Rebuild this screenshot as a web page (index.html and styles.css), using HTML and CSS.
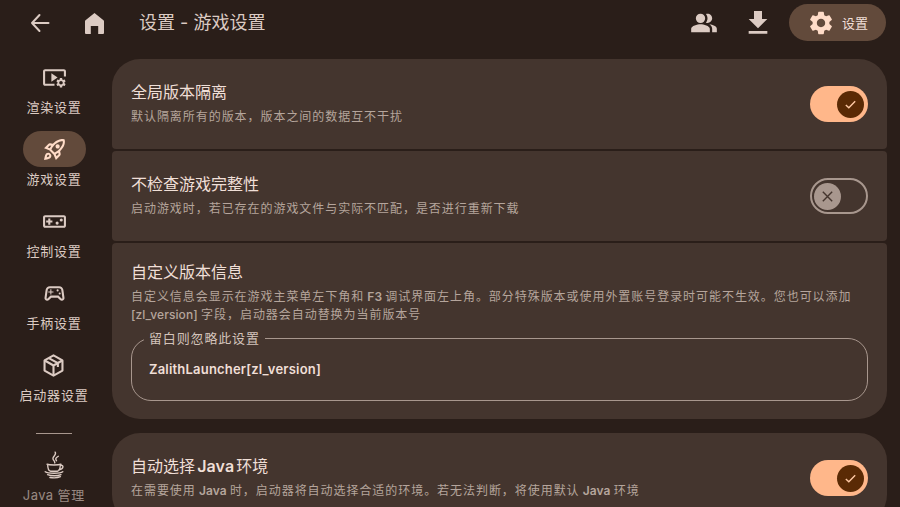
FILE: index.html
```html
<!DOCTYPE html>
<html lang="zh-CN">
<head>
    <meta charset="UTF-8">
    <meta name="viewport" content="width=device-width, initial-scale=1.0">
    <title>设置 - 游戏设置</title>
    <link rel="stylesheet" href="styles.css">
</head>
<body>
    <!-- Top bar -->
    <div class="topbar">
        <div class="topbar-left">
            <svg class="top-icon back-icon" viewBox="0 0 24 24"><path d="M20.500 12H4M11.500 4L4 12l7.500 8"/></svg>
            <svg class="top-icon" viewBox="0 0 24 24"><path d="M12.500 2l9 7.300c.3.2.5.6.5 1V22a1 1 0 01-1 1h-4.800v-8h-7.400v8H4a1 1 0 01-1-1V10.300c0-.4.200-.8.500-1z"/></svg>
            <span class="page-title">设置 - 游戏设置</span>
        </div>
        <div class="topbar-right">
            <svg class="people-icon" viewBox="0 0 24 24"><path d="M16.67 13.13C18.04 14.06 19 15.32 19 17v3h4v-3c0-2.18-3.57-3.47-6.33-3.87zM9 4a4 4 0 100 8 4 4 0 000-8zM15 12c2.21 0 4-1.79 4-4s-1.79-4-4-4c-.47 0-.91.1-1.33.24C14.5 5.27 15 6.58 15 8s-.5 2.73-1.33 3.76c.42.14.86.24 1.33.24zM9 13c-2.67 0-8 1.34-8 4v3h16v-3c0-2.66-5.33-4-8-4z"/></svg>
            <svg class="download-icon" viewBox="0 0 24 24"><path d="M19 9h-4V3H9v6H5l7 7 7-7zM5 18v2h14v-2H5z"/></svg>
            <div class="settings-pill">
                <svg class="gear-icon" viewBox="0 0 24 24"><path d="M19.14 12.94c.04-.3.06-.61.06-.94 0-.32-.02-.64-.07-.94l2.03-1.58a.49.49 0 00.12-.61l-1.92-3.32a.488.488 0 00-.59-.22l-2.39.96c-.5-.38-1.03-.7-1.62-.94l-.36-2.54a.484.484 0 00-.48-.41h-3.84c-.24 0-.43.17-.47.41l-.36 2.54c-.59.24-1.13.57-1.62.94l-2.39-.96c-.22-.08-.47 0-.59.22L2.74 8.87c-.12.21-.08.47.12.61l2.03 1.58c-.05.3-.09.63-.09.94s.02.64.07.94l-2.03 1.58a.49.49 0 00-.12.61l1.92 3.32c.12.22.37.29.59.22l2.39-.96c.5.38 1.03.7 1.62.94l.36 2.54c.05.24.24.41.48.41h3.84c.24 0 .44-.17.47-.41l.36-2.54c.59-.24 1.13-.56 1.62-.94l2.39.96c.22.08.47 0 .59-.22l1.92-3.32c.12-.22.07-.47-.12-.61l-2.01-1.58zM12 15.6c-1.98 0-3.6-1.62-3.6-3.6s1.62-3.6 3.6-3.6 3.6 1.62 3.6 3.6-1.62 3.6-3.6 3.6z"/></svg>
                <span>设置</span>
            </div>
        </div>
    </div>

    <div class="main">
        <!-- Side navigation -->
        <div class="sidebar">
            <div class="side-item">
                <div class="side-pill">
                    <svg class="side-icon" viewBox="0 0 24 24"><path d="M3 6h18v5h2V6c0-1.1-.9-2-2-2H3c-1.1 0-2 .9-2 2v12c0 1.1.9 2 2 2h9v-2H3V6z"/><path d="M15 12l-6-4v8z"/><path transform="translate(12.6 11.4) scale(.47)" d="M19.14 12.94c.04-.3.06-.61.06-.94 0-.32-.02-.64-.07-.94l2.03-1.58a.49.49 0 00.12-.61l-1.92-3.32a.488.488 0 00-.59-.22l-2.39.96c-.5-.38-1.03-.7-1.62-.94l-.36-2.54a.484.484 0 00-.48-.41h-3.84c-.24 0-.43.17-.47.41l-.36 2.54c-.59.24-1.13.57-1.62.94l-2.39-.96c-.22-.08-.47 0-.59.22L2.74 8.87c-.12.21-.08.47.12.61l2.03 1.58c-.05.3-.09.63-.09.94s.02.64.07.94l-2.03 1.58a.49.49 0 00-.12.61l1.92 3.32c.12.22.37.29.59.22l2.39-.96c.5.38 1.03.7 1.62.94l.36 2.54c.05.24.24.41.48.41h3.84c.24 0 .44-.17.47-.41l.36-2.54c.59-.24 1.13-.56 1.62-.94l2.39.96c.22.08.47 0 .59-.22l1.92-3.32c.12-.22.07-.47-.12-.61l-2.01-1.58zM12 15.6c-1.98 0-3.6-1.62-3.6-3.6s1.62-3.6 3.6-3.6 3.6 1.62 3.6 3.6-1.62 3.6-3.6 3.6z"/></svg>
                </div>
                <span class="side-label">渲染设置</span>
            </div>
            <div class="side-item active">
                <div class="side-pill">
                    <svg class="side-icon" viewBox="0 0 24 24"><path d="M6 15c-.83 0-1.58.34-2.12.88C2.7 17.06 2 22 2 22s4.94-.7 6.12-1.88c.54-.54.88-1.29.88-2.12 0-1.66-1.34-3-3-3zm.71 3.71c-.28.28-2.17.76-2.17.76s.47-1.88.76-2.17c.17-.19.42-.3.7-.3.55 0 1 .45 1 1 0 .28-.11.53-.29.71zm10.71-5.06c6.36-6.36 4.24-11.31 4.24-11.31S16.71.22 10.35 6.58l-2.49-.5c-.65-.13-1.33.08-1.81.55L2 10.69l5 2.14L11.17 17l2.14 5 4.05-4.05c.47-.47.68-1.15.55-1.81l-.49-2.49zM7.41 10.83l-1.91-.82 1.97-1.97 1.44.29c-.57.83-1.08 1.7-1.5 2.5zm6.58 7.67l-.82-1.91c.8-.42 1.67-.93 2.49-1.5l.29 1.44-1.96 1.97zM16 12.24c-1.32 1.32-3.38 2.4-4.04 2.73l-2.93-2.93c.32-.65 1.4-2.71 2.73-4.04 4.68-4.68 8.23-3.85 8.23-3.85s.83 3.55-3.99 8.09zM15 11c1.1 0 2-.9 2-2s-.9-2-2-2-2 .9-2 2 .9 2 2 2z"/></svg>
                </div>
                <span class="side-label">游戏设置</span>
            </div>
            <div class="side-item">
                <div class="side-pill">
                    <svg class="side-icon" viewBox="0 0 24 24"><path d="M21 6H3c-1.1 0-2 .9-2 2v8c0 1.1.9 2 2 2h18c1.1 0 2-.9 2-2V8c0-1.1-.9-2-2-2zm0 10H3V8h18v8zM6 15h2v-2h2v-2H8V9H6v2H4v2h2z"/><circle cx="14.5" cy="13.5" r="1.5"/><circle cx="18.5" cy="10.5" r="1.5"/></svg>
                </div>
                <span class="side-label">控制设置</span>
            </div>
            <div class="side-item">
                <div class="side-pill">
                    <svg class="side-icon" viewBox="0 0 24 24"><path d="M21.58 16.09l-1.09-7.66C20.21 6.46 18.52 5 16.53 5H7.47C5.48 5 3.79 6.46 3.51 8.43l-1.09 7.66C2.2 17.63 3.39 19 4.94 19c.68 0 1.32-.27 1.8-.75L9 16h6l2.25 2.25c.48.48 1.13.75 1.8.75 1.56 0 2.75-1.37 2.53-2.91zm-2.1.72c-.08.09-.21.19-.42.19-.15 0-.29-.06-.39-.16L15.83 14H8.17l-2.84 2.84c-.1.1-.24.16-.39.16-.21 0-.34-.1-.42-.19-.08-.09-.16-.23-.13-.44l1.09-7.66C5.63 7.74 6.48 7 7.47 7h9.06c.99 0 1.84.74 1.98 1.72l1.09 7.66c.03.2-.05.34-.12.43z"/><path d="M9 8H8v2H6v1h2v2h1v-2h2v-1H9V8z"/><circle cx="17" cy="12" r="1"/><circle cx="15" cy="9" r="1"/></svg>
                </div>
                <span class="side-label">手柄设置</span>
            </div>
            <div class="side-item">
                <div class="side-pill">
                    <svg class="side-icon line" viewBox="0 0 24 24"><path d="M12 2.300l8.600 4.800v9.800L12 21.700l-8.600-4.800V7.100z"/><path d="M3.600 7.200L12 12l8.400-4.800M12 12v9.500M7.500 4.900l8.700 4.900v3.600"/></svg>
                </div>
                <span class="side-label">启动器设置</span>
            </div>
            <div class="side-divider"></div>
            <div class="side-item faded">
                <div class="side-pill">
                    <svg class="side-icon line thin" viewBox="0 0 24 24"><path d="M13 1c1.700 2.700-3.300 3.800-1.600 6.500.6 1 1.600 1.600 1.200 2.700M15.700 4.500c-2.200 1.200-2.700 2.300-1.600 3.800M6 11.300c2.200 1 9.800 1 12 0M6.600 11.500c0 3 .9 5.300 2.300 5.800h6.200c1.400-.5 2.300-2.800 2.300-5.800M17.500 12.300c2.800-.5 3.300 2.900-1.200 3.800M4.500 17.800c2.200 1.700 12.800 1.700 15 0M6.500 20.300c3.200 1.300 8.500 1.300 11.500 0M8.500 22.700c2.800.5 6.800.3 9-.7"/></svg>
                </div>
                <span class="side-label"><span class="lat">Java </span>管理</span>
            </div>
        </div>

        <!-- Settings list -->
        <div class="content">
            <div class="group">
                <div class="card">
                    <div class="card-text">
                        <h3>全局版本隔离</h3>
                        <p>默认隔离所有的版本，版本之间的数据互不干扰</p>
                    </div>
                    <div class="switch on">
                        <div class="thumb"><svg viewBox="0 0 16 16"><path d="M3 8.500l3.200 3L13 4.500"/></svg></div>
                    </div>
                </div>
                <div class="card">
                    <div class="card-text">
                        <h3>不检查游戏完整性</h3>
                        <p>启动游戏时，若已存在的游戏文件与实际不匹配，是否进行重新下载</p>
                    </div>
                    <div class="switch off">
                        <div class="thumb"><svg viewBox="0 0 16 16"><path d="M3 3l10 10M13 3L3 13"/></svg></div>
                    </div>
                </div>
                <div class="card block">
                    <div class="card-text">
                        <h3>自定义版本信息</h3>
                        <p>自定义信息会显示在游戏主菜单左下角和<b class="lat"> F3 </b>调试界面左上角。部分特殊版本或使用外置账号登录时可能不生效。您也可以添加 <span class="lat">[zl_version] </span>字段，启动器会自动替换为当前版本号</p>
                    </div>
                    <div class="text-field">
                        <span class="field-label">留白则忽略此设置</span>
                        <span class="field-value">ZalithLauncher[zl_version]</span>
                    </div>
                </div>
            </div>
            <div class="group">
                <div class="card">
                    <div class="card-text">
                        <h3>自动选择<b class="lat"> Java </b>环境</h3>
                        <p>在需要使用<b class="lat"> Java </b>时，启动器将自动选择合适的环境。若无法判断，将使用默认<b class="lat"> Java </b>环境</p>
                    </div>
                    <div class="switch on">
                        <div class="thumb"><svg viewBox="0 0 16 16"><path d="M3 8.500l3.200 3L13 4.500"/></svg></div>
                    </div>
                </div>
            </div>
        </div>
    </div>
</body>
</html>
```

FILE: styles.css
```css
/* Base */
html, body {
    height: 100%;
}

body {
    margin: 0;
    overflow: hidden;
    background-color: #2a1e19;
    color: #f0dfd7;
    font-family: Inter, "Noto Sans CJK SC", sans-serif;
}

h3, p {
    margin: 0;
    font-weight: normal;
}

svg {
    display: block;
    fill: currentColor;
}

/* Latin words inside the Chinese text keep tighter spacing */
.lat {
    letter-spacing: 0.1px;
    font-weight: 500;
}

b.lat {
    font-weight: 600;
}

h3 .lat {
    word-spacing: -2px;
}

/* Top bar */
.topbar {
    display: flex;
    justify-content: space-between;
    align-items: center;
    height: 45px;
    padding: 0 14px 0 28px;
}

.topbar-left, .topbar-right {
    display: flex;
    align-items: center;
}

.topbar-left {
    gap: 30px;
}

.topbar-right {
    gap: 15px;
}

.top-icon {
    width: 24px;
    height: 24px;
    color: #dccbc3;
}

.back-icon {
    fill: none;
    stroke: currentColor;
    stroke-width: 2;
    stroke-linecap: round;
    stroke-linejoin: round;
}

.people-icon {
    width: 28px;
    height: 28px;
    margin-right: 9px;
    color: #dccbc3;
}

.download-icon {
    width: 32px;
    height: 32px;
    color: #dccbc3;
}

.page-title {
    margin-left: 3px;
    margin-bottom: 3px;
    font-size: 18px;
    color: #dccbc3;
}

.settings-pill {
    display: flex;
    align-items: center;
    gap: 7px;
    height: 37px;
    padding: 0 18px;
    border-radius: 19px;
    background-color: #624a3b;
    font-size: 13px;
    color: #f0dfd7;
}

.gear-icon {
    width: 28px;
    height: 28px;
    color: #ffdcc8;
}

/* Sidebar */
.main {
    display: flex;
    height: 462px;
}

.sidebar {
    flex: none;
    width: 108px;
    padding-top: 14px;
    display: flex;
    flex-direction: column;
    align-items: center;
}

.side-item {
    display: flex;
    flex-direction: column;
    align-items: center;
    height: 72px;
    flex: none;
}

.side-pill {
    display: flex;
    justify-content: center;
    align-items: center;
    flex: none;
    width: 63px;
    height: 36px;
    border-radius: 18px;
}

.side-item.active .side-pill {
    background-color: #624a3b;
}

.side-icon {
    width: 25px;
    height: 25px;
    color: #dccbc3;
}

.side-item.active .side-icon {
    color: #ffdcc8;
}

.side-icon.line {
    fill: none;
    stroke: currentColor;
    stroke-width: 2;
    stroke-linejoin: round;
}

.side-icon.line.thin {
    width: 28px;
    height: 28px;
    stroke-width: 1.200;
    stroke-linecap: round;
}

.side-label {
    font-size: 13px;
    letter-spacing: 0.8px;
    line-height: 24px;
    white-space: nowrap;
    color: #dccbc3;
}

.side-label .lat {
    font-weight: 400;
    letter-spacing: 0.4px;
}

.side-divider {
    flex: none;
    width: 36px;
    height: 1px;
    margin-top: 14px;
    margin-bottom: 13px;
    background-color: #a8978e;
}

.faded .side-label {
    opacity: 0.62;
}

/* Settings cards */
.content {
    flex: 1;
    padding: 14px 13px 0 4px;
    display: flex;
    flex-direction: column;
    gap: 14px;
    overflow: hidden;
}

.group {
    display: flex;
    flex-direction: column;
    gap: 2px;
    flex: none;
    border-radius: 28px;
    overflow: hidden;
}

.card {
    display: flex;
    justify-content: space-between;
    align-items: center;
    flex: none;
    box-sizing: border-box;
    height: 90px;
    padding: 0 19px 2px;
    border-radius: 4px;
    background-color: #44352e;
}

.card.block {
    display: block;
    height: 176px;
    padding-top: 17px;
}

.card-text h3 {
    font-size: 16px;
    line-height: 24px;
    color: #f0dfd7;
}

.card-text p {
    margin-top: 4px;
    font-size: 12px;
    letter-spacing: 0.95px;
    line-height: 18px;
    color: #b5a59c;
}

/* Switch */
.switch {
    display: flex;
    align-items: center;
    flex: none;
    box-sizing: border-box;
    width: 58px;
    height: 36px;
    margin-top: 2px;
    border-radius: 18px;
}

.switch.on {
    justify-content: flex-end;
    padding-right: 4px;
    background-color: #ffb78a;
}

.switch.off {
    padding-left: 2px;
    border: 2.500px solid #a8978e;
}

.thumb {
    display: flex;
    justify-content: center;
    align-items: center;
    width: 27px;
    height: 27px;
    border-radius: 50%;
}

.switch.on .thumb {
    background-color: #5a2a05;
    color: #ffc9a4;
}

.switch.off .thumb {
    background-color: #a8978e;
    color: #44352e;
}

.thumb svg {
    width: 15px;
    height: 15px;
    fill: none;
    stroke: currentColor;
    stroke-width: 1.500;
}

/* Text field */
.text-field {
    position: relative;
    display: flex;
    align-items: center;
    box-sizing: border-box;
    height: 63px;
    margin-top: 14px;
    padding-left: 17px;
    padding-bottom: 2px;
    border: 1px solid #a8978e;
    border-radius: 20px;
}

.field-label {
    position: absolute;
    left: 12px;
    top: -10px;
    padding: 0 5px;
    font-size: 13px;
    letter-spacing: 0.85px;
    line-height: 18px;
    background-color: #44352e;
    color: #d3c3ba;
}

.field-value {
    font-size: 13px;
    font-weight: 600;
    letter-spacing: 0.2px;
    color: #f0dfd7;
}
```
